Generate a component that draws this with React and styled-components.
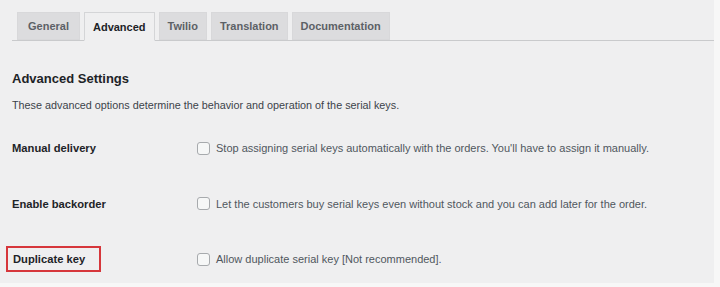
import React from "react";
import styled, { createGlobalStyle } from "styled-components";

const Global = createGlobalStyle`
  html, body { margin: 0; padding: 0; background: #f7f7f7; }
  body { font-family: "Liberation Sans", Arial, sans-serif; }
`;

const Page = styled.div`
  width: 714px;
  height: 283px;
  background: #efeff0;
  overflow: hidden;
  box-sizing: border-box;
  padding: 12px 0 0 12px;
`;

const TabBar = styled.nav`
  display: flex;
  align-items: flex-end;
  gap: 4px;
  height: 28px;
  padding-left: 5px;
  border-bottom: 1px solid #c9cacc;
`;

const Tab = styled.a`
  display: flex;
  align-items: center;
  box-sizing: border-box;
  height: ${(p) => (p.$active ? "29px" : "28px")};
  margin-bottom: ${(p) => (p.$active ? "-1px" : "0")};
  padding: 0 ${(p) => p.$pad}px;
  background: ${(p) => (p.$active ? "#efeff0" : "#dcdcde")};
  border: 1px solid ${(p) => (p.$active ? "#d4d5d7" : "#d8d8da")};
  border-bottom: ${(p) => (p.$active ? "1px solid #efeff0" : "1px solid #d8d8da")};
  color: ${(p) => (p.$active ? "#1d2327" : "#5c6166")};
  font-size: 11px;
  font-weight: 700;
  text-decoration: none;
  white-space: nowrap;
`;

const Heading = styled.h2`
  margin: 30px 0 0;
  font-size: 13px;
  font-weight: 700;
  color: #1d2327;
  line-height: 16px;
`;

const Description = styled.p`
  margin: 11px 0 0;
  font-size: 10.8px;
  color: #3c434a;
  line-height: 14px;
`;

const Rows = styled.div`
  margin-top: 22px;
  display: grid;
  grid-template-columns: 185px 1fr;
  grid-auto-rows: 55.5px;
`;

const Label = styled.div`
  display: flex;
  align-items: center;
  height: 14px;
  margin-top: 7px;
  font-size: 11.2px;
  font-weight: 700;
  color: #1d2327;
`;

const Highlight = styled.span`
  display: inline-flex;
  align-items: center;
  box-sizing: border-box;
  margin-left: -6px;
  padding-left: 5px;
  border: 2px solid #d6363b;
  width: 95px;
  height: 26px;
`;

const Option = styled.label`
  display: flex;
  align-items: center;
  gap: 6px;
  height: 14px;
  margin-top: 7px;
  font-size: 11px;
  color: #50575e;
`;

const Box = styled.span`
  display: inline-block;
  flex: none;
  width: 11px;
  height: 11px;
  border: 1px solid #a7aaad;
  border-radius: 3px;
  background: #f6f7f7;
`;

const tabs = [
  ["General", 10],
  ["Advanced", 8, true],
  ["Twilio", 8],
  ["Translation", 8],
  ["Documentation", 8],
];

const rows = [
  ["Manual delivery", "Stop assigning serial keys automatically with the orders. You'll have to assign it manually."],
  ["Enable backorder", "Let the customers buy serial keys even without stock and you can add later for the order."],
  ["Duplicate key", "Allow duplicate serial key [Not recommended].", true],
];

export default function App() {
  return (
    <>
      <Global />
      <Page>
        <TabBar>
          {tabs.map(([t, pad, active]) => (
            <Tab key={t} $pad={pad} $active={active}>
              {t}
            </Tab>
          ))}
        </TabBar>
        <Heading>Advanced Settings</Heading>
        <Description>
          These advanced options determine the behavior and operation of the serial keys.
        </Description>
        <Rows>
          {rows.map(([label, text, hl]) => (
            <React.Fragment key={label}>
              <Label>{hl ? <Highlight>{label}</Highlight> : label}</Label>
              <Option>
                <Box />
                {text}
              </Option>
            </React.Fragment>
          ))}
        </Rows>
      </Page>
    </>
  );
}
